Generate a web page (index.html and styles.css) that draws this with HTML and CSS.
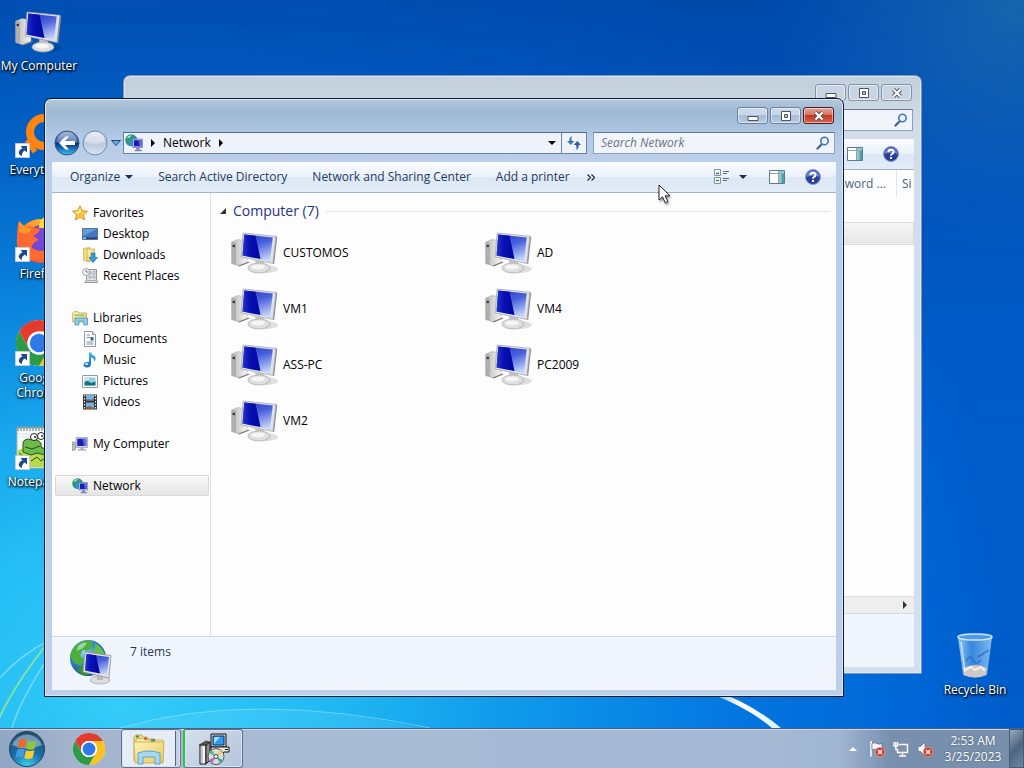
FILE: index.html
```html
<!DOCTYPE html>
<html lang="en">
<head>
<meta charset="utf-8">
<title>Network</title>
<link rel="stylesheet" href="styles.css">
</head>
<body>

<!-- shared icons -->
<svg class="defs" aria-hidden="true">
  <defs>
    <linearGradient id="g-screen" x1=".3" y1="0" x2=".7" y2="1"><stop offset="0" stop-color="#2c3cc4"/><stop offset=".4" stop-color="#4a62dc"/><stop offset="1" stop-color="#c4d6fb"/></linearGradient>
    <linearGradient id="g-screen2" x1="0" y1="0" x2="1" y2="0"><stop offset="0" stop-color="#2438cc"/><stop offset=".35" stop-color="#0a12b4"/><stop offset="1" stop-color="#0206a0"/></linearGradient>
    <linearGradient id="g-metal" x1="0" y1="0" x2="1" y2="0"><stop offset="0" stop-color="#b8b8b8"/><stop offset="1" stop-color="#f4f4f2"/></linearGradient>
    <radialGradient id="g-globe" cx=".35" cy=".3" r=".8"><stop offset="0" stop-color="#9be0ff"/><stop offset=".45" stop-color="#2f86d8"/><stop offset="1" stop-color="#0b3a80"/></radialGradient>
    <linearGradient id="g-back" x1="0" y1="0" x2="0" y2="1"><stop offset="0" stop-color="#8ba5d0"/><stop offset=".48" stop-color="#2c56a4"/><stop offset=".52" stop-color="#0a2f7c"/><stop offset="1" stop-color="#35c4f4"/></linearGradient>
    <linearGradient id="g-fwd" x1="0" y1="0" x2="0" y2="1"><stop offset="0" stop-color="#dde5ef"/><stop offset=".5" stop-color="#b9c8dc"/><stop offset="1" stop-color="#d9e4f2"/></linearGradient>
    <linearGradient id="g-folder" x1="0" y1="0" x2="1" y2="1"><stop offset="0" stop-color="#fff3b8"/><stop offset="1" stop-color="#e9c75c"/></linearGradient>
    <radialGradient id="g-orb" cx=".5" cy="1" r=".95"><stop offset="0" stop-color="#3fd4f4"/><stop offset=".5" stop-color="#1c6ea6"/><stop offset="1" stop-color="#26506f"/></radialGradient>
    <linearGradient id="g-bin" x1="0" y1="0" x2="1" y2="0"><stop offset="0" stop-color="#d4ecff" stop-opacity=".75"/><stop offset=".4" stop-color="#6cb0f0" stop-opacity=".5"/><stop offset="1" stop-color="#bfe0fc" stop-opacity=".7"/></linearGradient>
    <linearGradient id="g-note" x1="0" y1="0" x2="0" y2="1"><stop offset="0" stop-color="#3fb8ee"/><stop offset="1" stop-color="#1b68b8"/></linearGradient>
    <linearGradient id="g-fox" x1="1" y1="0" x2="0" y2="1"><stop offset="0" stop-color="#ffe03a"/><stop offset=".5" stop-color="#ff8a1e"/><stop offset="1" stop-color="#f0284c"/></linearGradient>

    <symbol id="i-computer" viewBox="0 0 48 48">
      <ellipse cx="34" cy="40" rx="13" ry="4" fill="#000" opacity=".12"/>
      <path d="M.7 13 7 10.500 16 12V34L8 37 .7 34.500Z" fill="url(#g-metal)" stroke="#a2a2a2" stroke-width=".5"/>
      <path d="M.7 13 5 14.300V36L.7 34.500Z" fill="#aeaeae"/>
      <circle cx="2.800" cy="17" r="1.300" fill="#333"/>
      <path d="M8 37 18 33" stroke="#777" stroke-width="1.200"/>
      <path d="M24 31 33 33 32 39H25Z" fill="#c4c4c4"/>
      <ellipse cx="28" cy="39" rx="11" ry="5" fill="#dededc" stroke="#a9a9a9" stroke-width=".7"/>
      <ellipse cx="27" cy="38" rx="7" ry="2.500" fill="#f6f6f6"/>
      <path d="M12 4 45 7.300 42 34.500 10.200 28Z" fill="#e0e1e5" stroke="#9ea0a6" stroke-width=".7"/>
      <path d="M45 7.300 46.200 8.300 43.200 35 42 34.500Z" fill="#8f9196"/>
      <path d="M13.300 5.500 41.700 8.500 39 32 11.500 26.500Z" fill="url(#g-screen)"/>
      <path d="M13.300 5.500 24.500 6.700 29.500 30 11.500 26.500Z" fill="url(#g-screen2)"/>
    </symbol>

    <symbol id="i-globe-pc" viewBox="0 0 48 48">
      <circle cx="20" cy="19" r="18" fill="url(#g-globe)"/>
      <path d="M8 6Q15 0 24 2L25 8 19 12 15 11 12 17 16 20 13 27 6 24 2 17Q4 10 8 6Z" fill="#4faf3c"/>
      <path d="M10 7Q14 3 19 4L15 9 9 12Z" fill="#b4e8d4" opacity=".7"/>
      <path d="M27 4Q36 9 38 19L32 20 27 14 23 13 27 9Z" fill="#66bd4c"/>
      <path d="M17 23 24 25 22 35 17 37Q12 35 9 31Z" fill="#388f34"/>
      <ellipse cx="32" cy="41" rx="10" ry="4" fill="#dcdcdc" stroke="#a4a4a4" stroke-width=".7"/>
      <path d="M29 34H35V41H29Z" fill="#bbb"/>
      <path d="M17 13 43 16.500 41 39 15 33Z" fill="#e0e1e5" stroke="#8f9196" stroke-width=".8"/>
      <path d="M18.500 15 41 18 39 36 17 31.500Z" fill="url(#g-screen)"/>
      <path d="M18.500 15 28 16.300 32 34.500 17 31.500Z" fill="url(#g-screen2)"/>
    </symbol>

    <symbol id="i-pc-small" viewBox="0 0 16 16">
      <path d="M0 6H3.500V14L0 14.500Z" fill="#b9bcc0" stroke="#83878c" stroke-width=".5"/>
      <path d="M1 8v1" stroke="#3a3" />
      <path d="M4 1.500H15.500V11.500H4Z" fill="#d2d4e2" stroke="#8a8cab" stroke-width=".6"/>
      <path d="M5.300 2.700H14.300V10H5.300Z" fill="#1b1fae"/>
      <path d="M10.500 2.700H14.300V10H12Z" fill="#5a70dc"/>
      <path d="M8.500 11.500H11.500V13H14V14.500H6V13H8.500Z" fill="#a8acb8"/>
    </symbol>

    <symbol id="i-net-small" viewBox="0 0 16 16">
      <circle cx="5.600" cy="5.600" r="5.400" fill="#2d93c9"/>
      <path d="M2 2Q5 0 8 1L6 4 3.500 5 4 9 1 7Q0 4 2 2ZM8 1.500 11 4 8 6Z" fill="#2f9a5c"/>
      <path d="M1.500 4Q3 1 6 1L4 3Z" fill="#c2f2ee"/>
      <path d="M7 4.500H15.700V12H7Z" fill="#c9cbea" stroke="#6468a6" stroke-width=".6"/>
      <path d="M8 5.500H14.700V11H8Z" fill="#1a1dae"/>
      <path d="M12 5.500H14.700V11H13Z" fill="#5a6ee0"/>
      <path d="M10 12.300H13V14H15V15.300H8.500V14H10Z" fill="#8287b8"/>
    </symbol>

    <symbol id="i-star" viewBox="0 0 16 16">
      <path d="M8 .8 10.200 5.600 15.500 6.200 11.600 9.700 12.700 15 8 12.300 3.300 15 4.400 9.700.5 6.200 5.800 5.600Z" fill="#fbc63c" stroke="#dd8a2c" stroke-width=".9"/>
      <path d="M8 2.700 9.300 6.400 6 9 2.500 6.900 6.400 6.500Z" fill="#fff2a8"/>
    </symbol>
    <symbol id="i-desktop" viewBox="0 0 16 16">
      <path d="M.5 2.500H15.500V13.500H.5Z" fill="#3f78c4" stroke="#5a6f90"/>
      <path d="M1 3H15L1 10Z" fill="#7caae2" opacity=".7"/>
      <path d="M1 11.500H15V13H1Z" fill="#243f74"/><path d="M1 11.500H4V13H1Z" fill="#7fd0f4"/>
    </symbol>
    <symbol id="i-downloads" viewBox="0 0 16 16">
      <path d="M1.500 1.500 8 .5V14.500L1.500 13.500Z" fill="#f4dc83" stroke="#c9a547" stroke-width=".7"/>
      <path d="M5 2H12.500V14H5Z" fill="url(#g-folder)" stroke="#c9a547" stroke-width=".7"/>
      <path d="M9.300 6H13V10.500H15.500L11 15.500 7 10.500H9.300Z" fill="#2f9fdc" stroke="#1d6ea6" stroke-width=".7"/>
    </symbol>
    <symbol id="i-recent" viewBox="0 0 16 16">
      <path d="M4.500 1.500H14.500V11L15.500 14.500H3L4.500 11Z" fill="#dfe3e8" stroke="#858b94" stroke-width=".9"/>
      <path d="M7 4H9V6H7ZM11 3.500H13V6H11ZM7 8H9V10H7ZM11 8H13V10H11ZM5 12.500H14" fill="#fff" stroke="#8a9099" stroke-width=".7"/>
      <circle cx="4" cy="4" r="3.400" fill="#f4f6f8" stroke="#8b929b" stroke-width=".8"/>
      <path d="M4 2V4H6" fill="none" stroke="#5d6570" stroke-width=".8"/>
    </symbol>
    <symbol id="i-libraries" viewBox="0 0 16 16">
      <path d="M.7 3 2 1.700H6L7 3H14.500V12H.7Z" fill="url(#g-folder)" stroke="#c3a84a" stroke-width=".8"/>
      <path d="M2.500 4.500H12V6H2.500Z" fill="#8cc668"/>
      <path d="M3 8H15.500V15H11.800V11H7V15H3Z" fill="#8ccdf0" stroke="#4c94c4" stroke-width=".8"/>
    </symbol>
    <symbol id="i-documents" viewBox="0 0 16 16">
      <path d="M2.500.5H10.500L13.500 3.500V15.500H2.500Z" fill="#fff" stroke="#83909c" stroke-width=".9"/>
      <path d="M10.500.5V3.500H13.500" fill="#d7dde4" stroke="#83909c" stroke-width=".8"/>
      <path d="M4.500 4H8M4.500 6.500H8M4.500 11H11.500M4.500 13H11.500" stroke="#7b93ad"/>
      <path d="M8.500 6H11.500V9.500H8.500Z" fill="#46607c"/>
    </symbol>
    <symbol id="i-music" viewBox="0 0 16 16">
      <path d="M7 .5H9Q10 3 12.500 4 15 6 12 10 13 6 9 5.500V12Q8.500 15.500 5 15.500 1.500 15.200 1.500 12.500 2 9.500 7 9.800Z" fill="url(#g-note)"/>
      <ellipse cx="4.500" cy="12" rx="1.800" ry="1.200" fill="#a6e2fa"/>
    </symbol>
    <symbol id="i-pictures" viewBox="0 0 16 16">
      <path d="M.5 2.500H15.500V14.500H.5Z" fill="#fff" stroke="#8c9aa6"/>
      <path d="M2.500 4.500H13.500V12.500H2.500Z" fill="#8fd0e4"/>
      <path d="M2.500 9 6 8 9 10 13.500 8.500V12.500H2.500Z" fill="#1c6f72"/>
      <path d="M3 5.500H7V7H3Z" fill="#e2f6f8"/>
    </symbol>
    <symbol id="i-videos" viewBox="0 0 16 16">
      <path d="M1 .5H15V15.500H1Z" fill="#2e3238"/>
      <path d="M4 1H12V7H4ZM4 8.500H12V15H4Z" fill="#6fb4e6"/>
      <path d="M4 5.500 7 5 9 6 12 4V7H4ZM4 13 8 12 12 14V15H4Z" fill="#9a5f48"/>
      <path d="M2.500 1V15M13.500 1V15" stroke="#e8edf2" stroke-dasharray="1.500 1.500" stroke-width="1.200"/>
    </symbol>

    <symbol id="i-search" viewBox="0 0 14 14">
      <path d="M1.500 12.500 5.500 8.500" stroke="#3b5f8c" stroke-width="2.200" stroke-linecap="round"/>
      <circle cx="8.500" cy="5" r="3.700" fill="#e8f4ff" stroke="#3f78b6" stroke-width="1.600"/>
    </symbol>
    <symbol id="i-pane" viewBox="0 0 16 14">
      <path d="M.5.5H15.500V13.500H.5Z" fill="#fff" stroke="#5c7a92"/>
      <path d="M10 1H15V13H10Z" fill="#8fcccc"/><path d="M12.500 4H15V13H12.500Z" fill="#4fa0a6"/>
      <path d="M1 3.500H15M9.500 1V13" stroke="#8fa3b4"/>
    </symbol>
    <symbol id="i-help" viewBox="0 0 16 16">
      <circle cx="8" cy="8" r="7.500" fill="#2940a0" stroke="#8c9cc4"/>
      <path d="M1.500 8A6.500 6.500 0 0 1 14.500 8Q8 5.500 1.500 8Z" fill="#8094d8" opacity=".8"/>
      <path d="M5.400 6.200Q5.600 3.800 8 3.800 10.600 3.900 10.500 6 10.300 7.400 8.800 8 8 8.400 8 9.700" fill="none" stroke="#fff" stroke-width="1.900"/>
      <path d="M7 11H9V13H7Z" fill="#fff"/>
    </symbol>

    <symbol id="i-min" viewBox="0 0 12 10"><path d="M1 5.500H11V9.500H1Z" fill="#fff" stroke="#4b5566"/></symbol>
    <symbol id="i-max" viewBox="0 0 12 10"><path d="M1.500.5H10.500V9.500H1.500Z" fill="#fff" stroke="#4b5566"/><path d="M4.500 3.500H7.500V6.500H4.500Z" fill="#b9c8dc" stroke="#4b5566"/></symbol>
    <symbol id="i-close" viewBox="0 0 12 10">
      <path d="M2.500 1.500 9.500 8.500M9.500 1.500 2.500 8.500" stroke="#4b4f5c" stroke-width="4"/>
      <path d="M2.500 1.500 9.500 8.500M9.500 1.500 2.500 8.500" stroke="#fff" stroke-width="2.200"/>
    </symbol>

    <symbol id="i-shortcut" viewBox="0 0 15 15">
      <path d="M.5.5H14.500V14.500H.5Z" fill="#fff" stroke="#c6ccd6"/>
      <path d="M5.500 3H12V9.500L9.800 7.500Q6.500 9.500 7 13 2 11 4.500 7.500 6 5.800 7.500 5.200Z" fill="#1c4a8c"/>
    </symbol>
    <symbol id="i-chrome" viewBox="0 0 32 32">
      <circle cx="16" cy="16" r="16" fill="#fff"/>
      <path d="M2.140 8A16 16 0 0 1 29.860 8H16A8 8 0 0 0 9.070 20Z" fill="#e33b2e"/>
      <path d="M29.860 8A16 16 0 0 1 16 32L22.930 20A8 8 0 0 0 16 8Z" fill="#fcc31e"/>
      <path d="M16 32A16 16 0 0 1 2.140 8L9.070 20A8 8 0 0 0 22.930 20Z" fill="#2c9b47"/>
      <circle cx="16" cy="16" r="8" fill="#fff"/><circle cx="16" cy="16" r="6.400" fill="#2f78ea"/>
    </symbol>
    <symbol id="i-badge-x" viewBox="0 0 10 10">
      <circle cx="5" cy="5" r="4.800" fill="#d63a30" stroke="#f2c3be" stroke-width=".5"/>
      <path d="M3 3 7 7M7 3 3 7" stroke="#fff" stroke-width="1.500"/>
    </symbol>
  </defs>
</svg>

<div class="desktop">
  <svg class="wallpaper" viewBox="0 0 1024 728" preserveAspectRatio="none" aria-hidden="true">
    <defs>
      <radialGradient id="w-glow" gradientUnits="userSpaceOnUse" cx="120" cy="700" r="900"><stop offset="0" stop-color="#34cbf8"/><stop offset=".2" stop-color="#24bdf4"/><stop offset=".42" stop-color="#109ceb"/><stop offset=".7" stop-color="#0274e0"/><stop offset=".9" stop-color="#0064d4"/><stop offset="1" stop-color="#005cc8"/></radialGradient>
      <linearGradient id="w-top" x1="0" y1="0" x2="0" y2="1"><stop offset="0" stop-color="#00419f" stop-opacity=".7"/><stop offset=".3" stop-color="#0048ac" stop-opacity=".4"/><stop offset=".6" stop-color="#0058c4" stop-opacity=".05"/><stop offset=".8" stop-color="#0060cc" stop-opacity="0"/></linearGradient>
      <radialGradient id="w-corner" gradientUnits="userSpaceOnUse" cx="1010" cy="10" r="240"><stop offset="0" stop-color="#2b7fae" stop-opacity=".5"/><stop offset="1" stop-color="#2070c0" stop-opacity="0"/></radialGradient>
      <linearGradient id="w-streak" x1="0" y1="0" x2="1" y2="0"><stop offset="0" stop-color="#fff" stop-opacity=".2"/><stop offset=".5" stop-color="#fff"/><stop offset="1" stop-color="#d8f2ff"/></linearGradient>
    </defs>
    <rect width="1024" height="728" fill="url(#w-glow)"/>
    <rect width="1024" height="728" fill="url(#w-top)"/>
    <rect width="1024" height="728" fill="url(#w-corner)"/>
    <path d="M-5 728Q10 690 50 640" fill="none" stroke="#9bea8c" stroke-width="2" opacity=".8"/>
    <path d="M0 678Q20 655 50 640M12 728Q20 700 50 655" fill="none" stroke="#b8f0ff" stroke-width="1.500" opacity=".5"/>
    <path d="M120 728Q250 690 420 728" fill="#8be4ff" opacity=".15"/>
    <path d="M120 728Q250 690 430 728" fill="none" stroke="#a6ecff" opacity=".5"/>
    <path d="M700 690Q745 705 772 728H781Q750 702 712 690Z" fill="url(#w-streak)"/>
  </svg>

  <nav class="shortcuts">
    <a class="shortcut" href="#"><svg class="icon48"><use href="#i-computer"/></svg><span>My Computer</span></a>
    <a class="shortcut" href="#">
      <svg class="icon48" viewBox="0 0 48 48"><circle cx="29" cy="20" r="14" fill="none" stroke="#ff8410" stroke-width="8"/><path d="M36 32 46 44" stroke="#ff8410" stroke-width="8"/><path d="M12 28 20 40" stroke="#ff8410" stroke-width="5"/><use href="#i-shortcut" x="0" y="31" width="15" height="15"/></svg>
      <span>Everything</span></a>
    <a class="shortcut" href="#">
      <svg class="icon48" viewBox="0 0 48 48"><circle cx="25" cy="25" r="22" fill="url(#g-fox)"/><circle cx="26" cy="22" r="13" fill="#7546d8"/><path d="M2 22Q2 10 4 5L10 11Q16 9 20 12L25 13 23 17 18 20 24 24Q18 26 16 32 24 40 36 33 26 50 11 42 0 34 2 22Z" fill="#ff6a30"/><path d="M4 5 10 11 17 13 12 18 4 16Z" fill="#f79a2c"/><path d="M24 12Q24 5 29 1 36 6 38 14L28 12Z" fill="#ffd83a"/><use href="#i-shortcut" x="0" y="31" width="15" height="15"/></svg>
      <span>Firefox</span></a>
    <a class="shortcut" href="#">
      <svg class="icon48" viewBox="0 0 48 48"><use href="#i-chrome" x="1" y="0" width="46" height="46"/><use href="#i-shortcut" x="0" y="31" width="15" height="15"/></svg>
      <span>Google Chrome</span></a>
    <a class="shortcut" href="#">
      <svg class="icon48" viewBox="0 0 48 48"><path d="M2 4H44V44H2Z" fill="#fcfdf8" stroke="#a9b4a4"/><path d="M3 2V7M6 2V7M9 2V7M12 2V7M15 2V7M18 2V7M21 2V7M24 2V7M27 2V7M30 2V7" stroke="#8d98a4" stroke-width="1.500"/><path d="M3 10H43M3 13H43" stroke="#cfe2ee"/><path d="M3 26Q20 19 43 26V43H3Z" fill="#b7d94a"/><path d="M8 22Q7 15 14 15 18 17 22 16 27 18 26 23L32 27 30 31 22 29 16 31 8 28Z" fill="#6dbb4a" stroke="#23501c"/><circle cx="19" cy="13" r="3.500" fill="#fff" stroke="#222"/><circle cx="26" cy="12" r="3.500" fill="#fff" stroke="#222"/><circle cx="20" cy="13" r="1" fill="#222"/><circle cx="27" cy="12" r="1" fill="#222"/><path d="M10 23 17 25 25 22M16 37 22 33 26 37 31 33M4 29 8 32" fill="none" stroke="#23501c"/><use href="#i-shortcut" x="0" y="31" width="15" height="15"/></svg>
      <span>Notepad++</span></a>
  </nav>

  <a class="shortcut recycle" href="#">
    <svg class="icon48" viewBox="0 0 48 48"><path d="M7 5 12 43Q24 48 36 43L41 5Z" fill="url(#g-bin)"/><path d="M12 36Q24 30 36 36L35 43Q24 48 13 43Z" fill="#cfc8c4"/><path d="M14 38 20 35 24 38 30 35 34 39" fill="none" stroke="#f0eeec" stroke-width="2"/><ellipse cx="24" cy="5" rx="17" ry="3" fill="#4e9ae4" stroke="#d0e6f4" stroke-width="1.500"/><path d="M15 29Q19 22 22 28T30 28M27 25 38 18" fill="none" stroke="#1c5cb4" stroke-width="1.500" opacity=".6"/><path d="M10 10 14 40" stroke="#fff" stroke-width="1.500" opacity=".6"/></svg>
    <span>Recycle Bin</span></a>

  <section class="window window-back">
    <div class="caption">
      <button class="cap-btn" aria-label="Minimize"><svg><use href="#i-min"/></svg></button>
      <button class="cap-btn" aria-label="Maximize"><svg><use href="#i-max"/></svg></button>
      <button class="cap-btn" aria-label="Close"><svg><use href="#i-close"/></svg></button>
    </div>
    <div class="navrow">
      <div class="address"></div>
      <div class="search"><input type="search" aria-label="Search"><svg><use href="#i-search"/></svg></div>
    </div>
    <div class="toolbar">
      <div class="tools">
        <button aria-label="Preview pane"><svg class="pane"><use href="#i-pane"/></svg></button>
        <button aria-label="Help"><svg class="icon16"><use href="#i-help"/></svg></button>
      </div>
    </div>
    <div class="list">
      <table>
        <thead><tr><th></th><th class="col-pass">Password ...</th><th class="col-size">Si</th></tr></thead>
        <tbody><tr class="gap"><td colspan="3"></td></tr><tr class="picked"><td colspan="3"></td></tr></tbody>
      </table>
      <div class="hscroll"><svg viewBox="0 0 4 8"><path d="M0 0 4 4 0 8Z" fill="#333"/></svg></div>
    </div>
    <div class="details"></div>
  </section>

  <section class="window window-front">
    <div class="caption">
      <button class="cap-btn" aria-label="Minimize"><svg><use href="#i-min"/></svg></button>
      <button class="cap-btn" aria-label="Maximize"><svg><use href="#i-max"/></svg></button>
      <button class="cap-btn cap-close" aria-label="Close"><svg><use href="#i-close"/></svg></button>
    </div>
    <div class="navrow">
      <div class="travel">
        <button aria-label="Back"><svg viewBox="0 0 26 26"><circle cx="13" cy="13" r="12" fill="url(#g-back)" stroke="#3a5276"/><path d="M3 12A10 10 0 0 1 23 12Q13 9 3 12Z" fill="#fff" opacity=".25"/><path d="M5 13 11.500 6.500H15L11 11H21V15H11L15 19.500H11.500Z" fill="#fff"/></svg></button>
        <button aria-label="Forward"><svg viewBox="0 0 26 26"><circle cx="13" cy="13" r="12" fill="url(#g-fwd)" stroke="#7388a4"/><path d="M3 12A10 10 0 0 1 23 12Q13 16 3 12Z" fill="#fff" opacity=".35"/></svg></button>
        <button class="recent" aria-label="Recent pages"><svg viewBox="0 0 10 6"><path d="M.5.500H9.500L5 5.500Z" fill="#6fa9da" stroke="#23466e"/></svg></button>
      </div>
      <div class="address">
        <svg class="icon18"><use href="#i-net-small"/></svg>
        <svg class="crumb" viewBox="0 0 4 8"><path d="M0 0 4 4 0 8Z"/></svg>
        <a href="#">Network</a>
        <svg class="crumb" viewBox="0 0 4 8"><path d="M0 0 4 4 0 8Z"/></svg>
        <button class="drop" aria-label="Previous locations"><svg class="down" viewBox="0 0 8 4"><path d="M0 0H8L4 4Z"/></svg></button>
        <button class="refresh" aria-label="Refresh"><svg viewBox="0 0 14 14"><path d="M5 0Q4 2.500 5 5H7.500L3.700 9 0 5H2.300Q2 1.500 5 0Z" fill="#3f79b8"/><path d="M9 14Q10 11.500 9 9H6.500L10.300 5 14 9H11.700Q12 12.500 9 14Z" fill="#34609c"/></svg></button>
      </div>
      <div class="search"><input type="search" placeholder="Search Network" aria-label="Search Network"><svg><use href="#i-search"/></svg></div>
    </div>
    <div class="toolbar">
      <button>Organize <svg class="down" viewBox="0 0 8 4"><path d="M0 0H8L4 4Z" fill="#1e2f4c"/></svg></button>
      <button>Search Active Directory</button>
      <button>Network and Sharing Center</button>
      <button>Add a printer</button>
      <button class="more" aria-label="More"><svg viewBox="0 0 8 7"><path d="M.5.500 3.500 3.500 .5 6.500M4.500.500 7.500 3.500 4.500 6.500" fill="none" stroke="#1e2f4c" stroke-width="1.300"/></svg></button>
      <div class="tools">
        <button aria-label="Change your view"><svg class="icon16" viewBox="0 0 16 16"><path d="M.5.500H6.500V6.500H.5ZM.5 8.500H6.500V14.500H.5Z" fill="#fff" stroke="#7d94a8"/><path d="M2 4.500H5" stroke="#2f6fb0" stroke-width="1.500"/><path d="M2 11.500H5" stroke="#3c8c4a" stroke-width="1.500"/><path d="M9 2.500H15M9 4.500H13M9 9.500H15M9 11.500H13" stroke="#5d6f80"/></svg><svg class="down" viewBox="0 0 8 4"><path d="M0 0H8L4 4Z" fill="#1e2f4c"/></svg></button>
        <button aria-label="Preview pane"><svg class="pane"><use href="#i-pane"/></svg></button>
        <button aria-label="Help"><svg class="icon16"><use href="#i-help"/></svg></button>
      </div>
    </div>
    <div class="panes">
      <nav class="tree">
        <ul>
          <li><a href="#"><svg class="icon16"><use href="#i-star"/></svg>Favorites</a></li>
          <li class="sub"><a href="#"><svg class="icon16"><use href="#i-desktop"/></svg>Desktop</a></li>
          <li class="sub"><a href="#"><svg class="icon16"><use href="#i-downloads"/></svg>Downloads</a></li>
          <li class="sub"><a href="#"><svg class="icon16"><use href="#i-recent"/></svg>Recent Places</a></li>
        </ul>
        <ul>
          <li><a href="#"><svg class="icon16"><use href="#i-libraries"/></svg>Libraries</a></li>
          <li class="sub"><a href="#"><svg class="icon16"><use href="#i-documents"/></svg>Documents</a></li>
          <li class="sub"><a href="#"><svg class="icon16"><use href="#i-music"/></svg>Music</a></li>
          <li class="sub"><a href="#"><svg class="icon16"><use href="#i-pictures"/></svg>Pictures</a></li>
          <li class="sub"><a href="#"><svg class="icon16"><use href="#i-videos"/></svg>Videos</a></li>
        </ul>
        <ul>
          <li><a href="#"><svg class="icon16"><use href="#i-pc-small"/></svg>My Computer</a></li>
        </ul>
        <ul>
          <li><a class="selected" href="#"><svg class="icon16"><use href="#i-net-small"/></svg>Network</a></li>
        </ul>
      </nav>
      <main class="items">
        <h2><svg viewBox="0 0 6 6"><path d="M6 0V6H0Z" fill="#333"/></svg>Computer (7)</h2>
        <div class="tiles">
          <a href="#"><svg class="icon48"><use href="#i-computer"/></svg>CUSTOMOS</a>
          <a href="#"><svg class="icon48"><use href="#i-computer"/></svg>AD</a>
          <a href="#"><svg class="icon48"><use href="#i-computer"/></svg>VM1</a>
          <a href="#"><svg class="icon48"><use href="#i-computer"/></svg>VM4</a>
          <a href="#"><svg class="icon48"><use href="#i-computer"/></svg>ASS-PC</a>
          <a href="#"><svg class="icon48"><use href="#i-computer"/></svg>PC2009</a>
          <a href="#"><svg class="icon48"><use href="#i-computer"/></svg>VM2</a>
        </div>
      </main>
    </div>
    <div class="details"><svg class="icon48"><use href="#i-globe-pc"/></svg><span>7 items</span></div>
  </section>

  <svg class="pointer" viewBox="0 0 13 20"><path d="M1 1V16L4.500 12.800 7.200 18.800 9.800 17.600 7.200 11.800H12Z" fill="#fff" stroke="#222"/></svg>
</div>

<footer class="taskbar">
  <button class="start" aria-label="Start">
    <svg viewBox="0 0 38 38"><circle cx="19" cy="19" r="17.500" fill="url(#g-orb)" stroke="#1d4464"/><path d="M4 15A16 16 0 0 1 34 15Q19 22 4 15Z" fill="#d4ecf8" opacity=".45"/><path d="M11.500 10Q15 8 18.700 10L17 18Q13.500 16.500 9.500 18Z" fill="#ef6a28"/><path d="M20 10.500Q24 13 28.500 10.500L26.800 18.500Q22.500 21 18.300 18.500Z" fill="#8cc63c"/><path d="M9.200 19.500Q13 18 16.700 19.700L15 27.500Q12 26 7.500 27.500Z" fill="#3f9be4"/><path d="M18 20.200Q22 22 26.400 20L24.600 28Q20.500 30 16.300 28Z" fill="#fcc92c"/></svg>
  </button>
  <button class="pinned" aria-label="Google Chrome"><svg class="icon32"><use href="#i-chrome"/></svg></button>
  <button class="task active" aria-label="Windows Explorer">
    <svg class="icon32" viewBox="0 0 32 32"><path d="M1 4 3 2H9L10 4H14L15 6H22V28H1Z" fill="#f4dc83" stroke="#bd9a3c" stroke-width=".8"/><path d="M3 6 11 5 12 7H30V29H3Z" fill="#fae9a2" stroke="#c7a64a" stroke-width=".8"/><path d="M1 9H31L30 30H2Z" fill="url(#g-folder)" stroke="#c9a84a" stroke-width=".8"/><path d="M3 3.500H6" stroke="#2c9b47" stroke-width="2"/><path d="M11 5.500H14" stroke="#c8502c" stroke-width="2"/><path d="M18 7.500H22" stroke="#338a5c" stroke-width="2"/><path d="M5 20Q16 16 27 20V31H22V24H10V31H5Z" fill="#a6d8f2" stroke="#5ba2cc"/></svg>
  </button>
  <button class="task" aria-label="Installer">
    <svg class="icon32" viewBox="0 0 32 32"><path d="M13 1H28V14H13Z" fill="#d5d5d5" stroke="#111"/><path d="M15 3H26V12H15Z" fill="#2e9cf0" stroke="#0b2f6a"/><path d="M17 4H22L16 11V5Z" fill="#9fdcff"/><path d="M13 14H31V19H26L24 21H13Z" fill="#e8e8e8" stroke="#111"/><path d="M27 16.500H30" stroke="#111"/><path d="M2 12H8V31H2Z" fill="#f4f4f4" stroke="#111"/><path d="M8 12 12 9V27L8 31Z" fill="#8b8f94" stroke="#111"/><path d="M4 13V30" stroke="#999"/><path d="M1 12 8 8 12 9 8 12Z" fill="#555" stroke="#111" stroke-width=".5"/><circle cx="18" cy="23.500" r="8" fill="#dcdcdc" stroke="#555"/><path d="M18 23.500 11 20 14 17Z" fill="#4bc08a"/><path d="M18 23.500 25 27 22 30Z" fill="#3ba7a0"/><path d="M18 23.500 22 16.500 25 20Z" fill="#e8d05c"/><path d="M18 23.500 14 30.500 11 27Z" fill="#b06cc4"/><circle cx="18" cy="23.500" r="2" fill="#fff" stroke="#444"/></svg>
  </button>
  <div class="tray">
    <button aria-label="Show hidden icons"><svg class="up" viewBox="0 0 8 4"><path d="M4 0 8 4H0Z" fill="#fff"/></svg></button>
    <button aria-label="Action Center"><svg class="icon16" viewBox="0 0 16 16"><path d="M2 1V15.500M1 1H3" stroke="#fff" stroke-width="1.500"/><path d="M3 2.500Q6 1 8 2.500T13 2.500V9Q10.500 10.500 8 9T3 9Z" fill="#f4f7fa" stroke="#44566c" stroke-width=".6"/><use href="#i-badge-x" x="6" y="6" width="10" height="10"/></svg></button>
    <button aria-label="Network"><svg class="icon16" viewBox="0 0 16 16"><path d="M5.500 3.500H14.500V11.500H4.500V8" fill="#7f92a8" stroke="#fff" stroke-width="1.400"/><path d="M9.500 12V14.500M6 15H13" stroke="#fff" stroke-width="1.400"/><path d="M1 1V5H4.500V1M2.800 1V8.500H5" fill="none" stroke="#fff" stroke-width="1.300"/></svg></button>
    <button aria-label="Volume muted"><svg class="icon16" viewBox="0 0 16 16"><path d="M1 5.500H3.500L8 1V15L3.500 10.500H1Z" fill="#f6f8fa" stroke="#53657a" stroke-width=".6"/><use href="#i-badge-x" x="6" y="6" width="10" height="10"/></svg></button>
  </div>
  <time class="clock" datetime="2023-03-25T02:53">2:53 AM<br>3/25/2023</time>
  <button class="peek" aria-label="Show desktop"></button>
</footer>

</body>
</html>
```

FILE: styles.css
```css
* { box-sizing: border-box; }
body {
  margin: 0;
  height: 100vh;
  display: flex;
  flex-direction: column;
  overflow: hidden;
  font-family: "Open Sans", "Noto Sans", sans-serif;
  font-size: 12px;
  line-height: 16px;
  color: #000;
}
a { color: inherit; text-decoration: none; }
button {
  margin: 0;
  padding: 0;
  border: 0;
  background: none;
  font: inherit;
  color: inherit;
}
svg { display: block; flex: none; }
ul { list-style: none; margin: 0; padding: 0; }
.defs { position: absolute; width: 0; height: 0; }
.icon16 { width: 16px; height: 16px; }
.icon18 { width: 18px; height: 18px; }
.icon32 { width: 32px; height: 32px; }
.icon48 { width: 48px; height: 48px; }
.down { width: 8px; height: 4px; }

/* desktop */
.desktop {
  position: relative;
  flex: 1;
  min-height: 0;
  background: #0a78d8;
}
.wallpaper { position: absolute; width: 100%; height: 100%; }
.shortcuts { position: relative; width: 78px; }
.shortcut {
  display: flex;
  flex-direction: column;
  align-items: center;
  gap: 2px;
  width: 78px;
  height: 104px;
  padding-top: 8px;
  color: #fff;
  text-align: center;
  line-height: 15px;
  text-shadow: 1px 1px 2px #000, 0 1px 3px #000;
}
.shortcut span { white-space: nowrap; }
.shortcut:nth-child(4) span { width: 50px; white-space: normal; }
.recycle {
  position: absolute;
  right: 10px;
  bottom: 0;
}

/* windows */
.window {
  position: absolute;
  display: flex;
  flex-direction: column;
  padding: 0 7px 6px;
  border: 1px solid #101c2c;
  border-radius: 7px 7px 0 0;
  box-shadow: inset 0 0 0 1px #d8e6f6;
}
.window-front {
  left: 44px;
  top: 98px;
  right: 180px;
  bottom: 31px;
  background: linear-gradient(#b4c6da, #9db9d4 14px, #b4cae6 40px, #bccfea 64px, #bccfea);
}
.window-back {
  left: 123px;
  top: 75px;
  right: 102px;
  bottom: 54px;
  border-color: #7f95b0;
  background: linear-gradient(#c4d0dc, #c4d0dc 10px, #d2dde9 50px, #d2dfec);
}
.caption {
  display: flex;
  justify-content: flex-end;
  gap: 2px;
  height: 33px;
  padding: 8px 2px 0;
}
.cap-btn {
  display: flex;
  align-items: center;
  justify-content: center;
  width: 31px;
  height: 17px;
  border: 1px solid #6b809c;
  border-radius: 3px;
  background: linear-gradient(#c9d8ea 50%, #a6bcd8 50%, #b8cbe2);
  box-shadow: inset 0 0 0 1px rgba(255, 255, 255, .5);
}
.cap-btn svg { width: 12px; height: 10px; }
.window-back .cap-btn { background: #c9d5e2; border-color: #8094ac; }
.cap-btn.cap-close {
  border-color: #4c1a20;
  background: linear-gradient(#e5a296, #d5705e 50%, #bf3a22 50%, #d8684a);
}

.navrow {
  display: flex;
  height: 30px;
  align-items: flex-start;
}
.travel { display: flex; margin: -2px 0 0 2px; }
.travel button { margin-right: 2px; }
.travel button svg { width: 26px; height: 26px; }
.travel .recent { width: 13px; margin: 0; padding-left: 1px; }
.travel .recent svg { width: 10px; height: 6px; }
.address {
  flex: 1;
  display: flex;
  align-items: center;
  height: 22px;
  padding-left: 1px;
  border: 1px solid #6b84a4;
  border-top-color: #4f6a8c;
  background: #eef3fb;
}
.address .crumb { width: 4px; height: 8px; margin: 0 8px; }
.address .drop { margin-left: auto; padding: 8px 5px; }
.address .refresh {
  display: flex;
  align-items: center;
  justify-content: center;
  align-self: stretch;
  width: 25px;
  border-left: 1px solid #6b84a4;
}
.refresh svg { width: 14px; height: 14px; }
.search {
  display: flex;
  align-items: center;
  width: 242px;
  height: 22px;
  margin: 0 1px 0 6px;
  padding: 0 4px 0 7px;
  border: 1px solid #8ba2bf;
  border-top-color: #5f7896;
  background: #f1f5fb;
}
.search input {
  flex: 1;
  min-width: 0;
  padding: 0;
  border: 0;
  outline: 0;
  background: none;
  font: inherit;
  font-style: italic;
}
.search input::placeholder { color: #6d7680; }
.search svg { width: 14px; height: 14px; }

.toolbar {
  display: flex;
  align-items: center;
  height: 31px;
  padding: 0 15px 0 18px;
  gap: 25px;
  border-bottom: 1px solid #a3b4c8;
  background: linear-gradient(#fafcff, #e9f1fb 50%, #dde8f5 50%, #e3ecf8);
  color: #1e395b;
}
.toolbar button { display: flex; align-items: center; gap: 5px; white-space: nowrap; }
.toolbar .more { margin-left: -8px; }
.more svg { width: 8px; height: 7px; }
.tools { display: flex; gap: 20px; margin-left: auto; }
.tools button { gap: 9px; }
.window-front .tools button:first-child { margin-right: 2px; }
.pane { width: 16px; height: 14px; }

.panes { display: flex; flex: 1; min-height: 0; background: #fdfdfe; }
.tree {
  width: 159px;
  padding: 9px 1px 0 3px;
  border-right: 1px solid #d6e2f2;
}
.tree ul { margin-bottom: 21px; }
.tree a {
  display: flex;
  align-items: center;
  gap: 5px;
  height: 21px;
  padding-left: 16px;
  border: 1px solid transparent;
  border-radius: 2px;
}
.tree .sub a { padding-left: 26px; }
.tree a.selected {
  border-color: #d9d9d9;
  background: linear-gradient(#f8f8f8, #e5e5e5);
}
.items { flex: 1; padding: 8px 6px 0 9px; }
.items h2 {
  display: flex;
  align-items: center;
  gap: 7px;
  margin: 0 0 6px;
  color: #1e3287;
  font-size: 14px;
  line-height: 20px;
  font-weight: normal;
}
.items h2 svg { width: 6px; height: 6px; }
.items h2::after { content: ""; flex: 1; height: 1px; background: #e2e6ee; }
.tiles {
  display: grid;
  grid-template-columns: repeat(auto-fill, 254px);
  padding: 2px 0 0 11px;
}
.tiles a { display: flex; align-items: center; gap: 4px; height: 56px; padding-bottom: 8px; }
.details {
  display: flex;
  gap: 14px;
  height: 54px;
  padding: 2px 16px;
  border-top: 1px solid #d0dcea;
  background: #f1f5fd;
  color: #1e395b;
}
.details span { padding-top: 5px; }

/* back window list */
.list { flex: 1; display: flex; flex-direction: column; background: #fdfdfe; overflow: hidden; }
.list table { width: 100%; border-collapse: collapse; table-layout: fixed; }
.list th {
  height: 27px;
  padding: 0;
  font-weight: normal;
  text-align: right;
  white-space: nowrap;
  color: #4c607a;
}
.list td { padding: 0; }
.list .col-pass { width: 90px; padding-right: 10px; border-right: 1px solid #e0e6ee; }
.list .col-size { width: 17px; padding-left: 5px; text-align: left; }
.list .gap td { height: 25px; }
.list .picked td { height: 22px; border: 1px solid #dcdcdc; background: linear-gradient(#f6f6f6, #e6e6e6); }
.hscroll {
  display: flex;
  align-items: center;
  justify-content: flex-end;
  height: 17px;
  margin-top: auto;
  padding-right: 7px;
  background: #eee;
  border-top: 1px solid #e0e0e0;
}
.hscroll svg { width: 4px; height: 8px; }

.pointer {
  position: absolute;
  left: 658px;
  top: 184px;
  width: 13px;
  height: 20px;
  filter: drop-shadow(1px 2px 1px rgba(0, 0, 0, .4));
}

/* taskbar */
.taskbar {
  display: flex;
  align-items: center;
  height: 40px;
  border-top: 1px solid #47617f;
  box-shadow: inset 0 1px 0 #c8d8ea;
  background: linear-gradient(90deg, #8fa6c4, #a3b3cc 70px, #a9bbd4 240px, #a5b9d5 76%, #9fb5d2 82%, #7890ae 87%, #7990ac);
}
.start { padding-left: 8px; }
.start svg { width: 38px; height: 38px; }
.pinned { margin: 0 16px 0 27px; }
.task {
  display: flex;
  align-items: center;
  justify-content: center;
  align-self: stretch;
  width: 60px;
  margin-right: 2px;
  border: 1px solid #5d728e;
  border-radius: 3px;
  background: linear-gradient(135deg, #d6e0ee, #b4c4da);
  box-shadow: inset 0 0 0 1px #d9e4f2;
}
.task.active {
  padding-right: 5px;
  background: linear-gradient(90deg, #e6edf6 53px, #50668a 53px, #50668a 54px, #c2d0e2 54px);
}
.task:not(.active) { border-left: 2px solid #28c43c; }
.tray { display: flex; align-items: center; gap: 8px; margin-left: auto; }
.tray .up { width: 8px; height: 4px; margin-right: 4px; }
.clock {
  width: 72px;
  margin-left: 4px;
  color: #fff;
  text-align: center;
  text-shadow: 0 0 2px #456;
}
.peek {
  align-self: stretch;
  width: 15px;
  border: 1px solid #45597a;
  background: linear-gradient(135deg, #9aaabd, #4f6480 50%, #71869f);
}
```
